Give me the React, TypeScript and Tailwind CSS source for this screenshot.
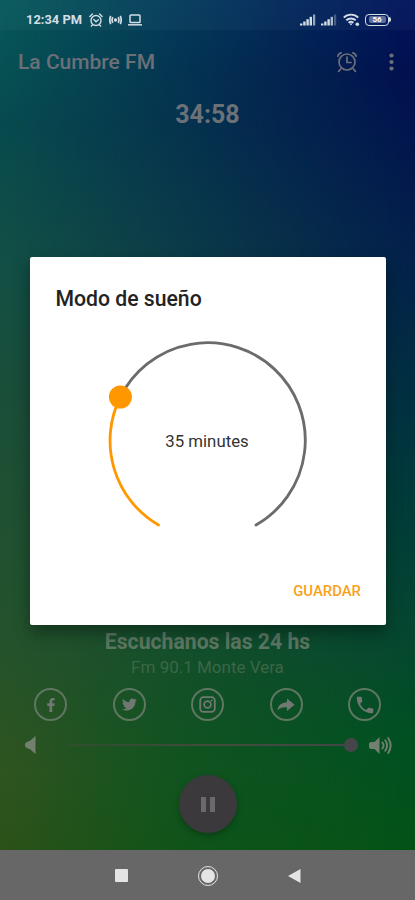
import type { ReactNode } from "react";
import { FaFacebookF, FaTwitter } from "react-icons/fa";
import { MdPhone } from "react-icons/md";

const InstagramIcon = () => (
  <svg className="size-[17px]" viewBox="0 0 17 17" fill="none" stroke="currentColor" strokeWidth="1.8">
    <rect x="1.2" y="1.2" width="14.6" height="14.6" rx="3.4" />
    <circle cx="8.5" cy="8.5" r="3.4" />
    <circle cx="12.6" cy="4.4" r="0.9" fill="currentColor" stroke="none" />
  </svg>
);

const ShareIcon = () => (
  <svg className="h-[14px] w-[18px]" viewBox="0 0 18 14" fill="currentColor">
    <path d="M10 0.6 17.6 6.8 10 13V9.4C5.600 9 3 10 0.400 12.400 1.200 7.600 4.200 4.600 10 4.300Z" />
  </svg>
);

const socialLinks = [
  { name: "Facebook", icon: <FaFacebookF className="size-[14px]" /> },
  { name: "Twitter", icon: <FaTwitter className="size-[15px]" /> },
  { name: "Instagram", icon: <InstagramIcon /> },
  { name: "Share", icon: <ShareIcon /> },
  { name: "Phone", icon: <MdPhone className="size-[22px]" /> },
];

const AlarmIcon = ({ className }: { className: string }) => (
  <svg className={className} viewBox="0 0 22 22" fill="none" stroke="currentColor" strokeWidth="1.7" strokeLinecap="round">
    <circle cx="11" cy="11" r="8" />
    <path d="M11 6v5.5h4" />
    <path d="M1.8 5.2C2.2 3.4 3.4 2.2 5.2 1.8M20.2 5.2c-.4-1.8-1.6-3-3.4-3.4M4.6 18l-2 2.4M17.4 18l2 2.4" />
  </svg>
);

const SignalIcon = ({ weak }: { weak?: boolean }) => (
  <svg className="h-3 w-4" viewBox="0 0 16 12" fill="currentColor">
    <rect x="0" y="9.5" width="2.4" height="2" />
    <rect x="3.2" y="7.5" width="2.4" height="4" />
    <rect x="6.4" y="5.2" width="2.4" height="6.3" />
    <rect x="9.6" y="2.8" width="2.4" height="8.7" opacity={weak ? 0.8 : 1} />
    <rect x="13" y="0.5" width="2.2" height="11" opacity={weak ? 0.3 : 0.7} />
  </svg>
);

const StatusBar = () => (
  <div className="flex h-[30px] items-center bg-white/[0.03] pt-[9px] pr-6 pl-[26px] text-[#d3dee6]">
    <span className="w-[57px] text-[12.9px] font-bold whitespace-nowrap">12:34 PM</span>
    <svg className="ml-1.5 h-[14px] w-[14px]" viewBox="0 0 14 14" fill="none" stroke="currentColor" strokeWidth="1.4" strokeLinecap="round">
      <circle cx="7" cy="7.5" r="5" />
      <path d="M4.8 6.5 7 8.7l2.4-2M.9 3.4 3.4 1M13.1 3.4 10.6 1M3.4 12l-1 1M10.6 12l1 1" />
    </svg>
    <svg className="ml-[6px] h-[10px] w-[13px]" viewBox="0 0 13 10" fill="none" stroke="currentColor" strokeWidth="1.7">
      <circle cx="6.5" cy="5" r="1.7" fill="currentColor" stroke="none" />
      <path d="M3.9 2.2c-1 1.6-1 4 0 5.6M9.1 2.2c1 1.6 1 4 0 5.6M1.7.8C.7 3.2.7 6.8 1.7 9.2M11.3.8c1 2.4 1 6 0 8.4" />
    </svg>
    <svg className="ml-[6px] h-3 w-[14px]" viewBox="0 0 14 12" fill="none" stroke="currentColor" strokeWidth="1.5">
      <rect x="2" y="1" width="10" height="7.6" rx="0.8" />
      <path d="M0 10.8h14" />
    </svg>
    <div className="ml-auto flex items-center">
      <SignalIcon />
      <div className="w-[5px]" />
      <SignalIcon weak />
      <svg className="ml-[6px] h-[14px] w-[17px]" viewBox="0 0 17 14" fill="none" stroke="currentColor" strokeWidth="1.9">
        <path d="M.8 4.6c4-4 10.4-4 14.4 0M3.3 7.3c2.7-2.5 6.7-2.5 9.4 0M5.6 9.7c1.4-1.2 3.4-1.2 4.8 0" />
        <path d="M6.4 10.4 8 12.4l1.6-2Z" fill="currentColor" stroke="none" />
        <circle cx="14.3" cy="11.2" r="1.8" fill="currentColor" stroke="none" />
      </svg>
      <div className="ml-[5px] flex h-3 w-6 items-center justify-center rounded-[4px] border-[1.5px] border-current">
        <span className="flex h-[7px] w-[17px] items-center justify-center rounded-[2px] bg-[#b5c0dc]/50 text-[8px] leading-none font-bold text-white">56</span>
      </div>
      <div className="h-[5px] w-0.5 rounded-r bg-current" />
    </div>
  </div>
);

const CircleButton = ({ children, label }: { children: ReactNode; label: string }) => (
  <button
    aria-label={label}
    className="flex size-[33px] items-center justify-center rounded-full border-2 border-[#5f7660] text-[#707871]"
  >
    {children}
  </button>
);

const SleepDialog = () => (
  <div className="absolute top-[257px] left-[30px] flex h-[368px] w-[356px] flex-col rounded-[2px] bg-white shadow-[0_8px_16px_rgba(0,0,0,0.35)]">
    <h2 className="pt-7 pl-[25.5px] text-[21.2px] leading-7 font-medium text-[#222]">Modo de sueño</h2>
    <div className="mt-6 ml-[69px] grid h-[204px] w-[216px]">
      <svg className="col-start-1 row-start-1 h-[204px] w-[216px]" viewBox="0 0 216 204" fill="none" strokeWidth="2.8" strokeLinecap="round">
        <path d="M21.4 60A97.5 97.5 0 1 1 157 188" stroke="#6b6a6d" />
        <path d="M59.5 188A97.5 97.5 0 0 1 21.4 60" stroke="#ff9800" />
        <circle cx="21.4" cy="60" r="11.5" fill="#ff9800" />
      </svg>
      <span className="col-start-1 row-start-1 mt-[92px] justify-self-center text-[16.8px] leading-6 text-[#333]">35 minutes</span>
    </div>
    <button className="mt-auto mr-[25px] mb-[22px] self-end text-[14.9px] leading-6 font-medium text-[#f9a11b]">GUARDAR</button>
  </div>
);

const App = () => {
  return (
    <div className="relative isolate grid h-[900px] w-[415px] overflow-hidden font-[Roboto,sans-serif]">
      {/* background */}
      <div className="col-start-1 row-start-1 bg-[linear-gradient(180deg,#06595a_0%,#084b4e_14%,#125046_28%,#1c4f38_45%,#24532c_70%,#2f5420_86%,#2b5217_95%)]" />
      <div className="col-start-1 row-start-1 bg-[linear-gradient(180deg,#00125c_0%,#010f4f_8%,#03204b_28%,#003a3a_55%,#04482f_72%,#005022_82%,#035317_95%)] [mask-image:linear-gradient(90deg,transparent,black)]" />
      <div className="col-start-1 row-start-1 bg-[radial-gradient(ellipse_210px_260px_at_240px_820px,rgba(8,88,32,0.6),rgba(8,88,32,0))]" />

      <div className="z-10 col-start-1 row-start-1 flex flex-col">
        <StatusBar />
        <header className="flex h-16 items-center pr-[20px] pl-[18px] text-[#6b7078]">
          <h1 className="mt-0.5 text-[21px] font-medium">La Cumbre FM</h1>
          <AlarmIcon className="-mt-px ml-auto size-[22px]" />
          <svg className="-mt-px ml-[30px] h-[18px] w-[7px]" viewBox="0 0 7 18" fill="currentColor">
            <circle cx="3.5" cy="2.5" r="2.1" />
            <circle cx="3.5" cy="9" r="2.1" />
            <circle cx="3.5" cy="15.5" r="2.1" />
          </svg>
        </header>
        <div className="mt-[5px] text-center text-[25px] leading-8 font-bold text-[#6b7177]">34:58</div>

        <div className="mt-auto text-center text-[21.2px] leading-7 font-bold text-[#5c7662]">Escuchanos las 24 hs</div>
        <div className="-mt-px text-center text-[17px] leading-6 text-[#3d6647]">Fm 90.1 Monte Vera</div>
        <div className="mt-[9px] flex justify-between px-[34px]">
          {socialLinks.map((link) => (
            <CircleButton key={link.name} label={link.name}>
              {link.icon}
            </CircleButton>
          ))}
        </div>

        {/* volume */}
        <div className="mt-3 flex h-6 items-center pr-[22px] pl-[25px] text-[#74806f]">
          <svg className="h-[18px] w-[11px]" viewBox="0 0 11 18" fill="currentColor">
            <path d="M10.5 0v18L5 13.3 1.400 11.800Q0 11 0 9T1.400 6.200L5 4.700Z" />
          </svg>
          <div className="ml-8 flex flex-1 items-center">
            <div className="h-0.5 flex-1 bg-gradient-to-r from-[#434b3c]/40 via-[#434b3c] to-[#414844]" />
            <div className="size-3.5 rounded-full bg-[#464549]" />
          </div>
          <svg className="ml-[11px] h-[19px] w-[24px]" viewBox="0 0 24 19" fill="none" stroke="currentColor" strokeWidth="1.9" strokeLinecap="round">
            <path d="M10.5 1v17L5.5 13H2Q0 13 0 11V8Q0 6 2 6h3.5Z" fill="currentColor" stroke="none" />
            <path d="M13.4 6.500c1.400 1.800 1.400 4.200 0 6M16.300 4.200c2.200 3.200 2.200 7.400 0 10.600M19.200 2c3 4.600 3 10.400 0 15" />
          </svg>
        </div>

        <button
          aria-label="Pause"
          className="mt-[18px] mb-[17px] flex size-[58px] items-center justify-center gap-1 self-center rounded-full bg-[#3c393c] shadow-[0_3px_6px_rgba(0,0,0,0.25)]"
        >
          <span className="h-[15px] w-[5px] bg-[#6a6a6a]" />
          <span className="h-[15px] w-[5px] bg-[#6a6a6a]" />
        </button>

        <nav className="flex h-[50px] items-center justify-center bg-[#676767] pt-px text-[#e4e4e4]">
          <div className="size-[13px] rounded-[1px] bg-current" />
          <div className="mx-[70px] flex size-5 items-center justify-center rounded-full border-[1.5px] border-current">
            <div className="size-[14px] rounded-full bg-current" />
          </div>
          <svg className="h-[14px] w-[13px]" viewBox="0 0 13 14" fill="currentColor">
            <path d="M12.5 0v14L0 7Z" />
          </svg>
        </nav>
      </div>

      <div className="z-20 col-start-1 row-start-1">
        <SleepDialog />
      </div>
    </div>
  );
};

export default App;
